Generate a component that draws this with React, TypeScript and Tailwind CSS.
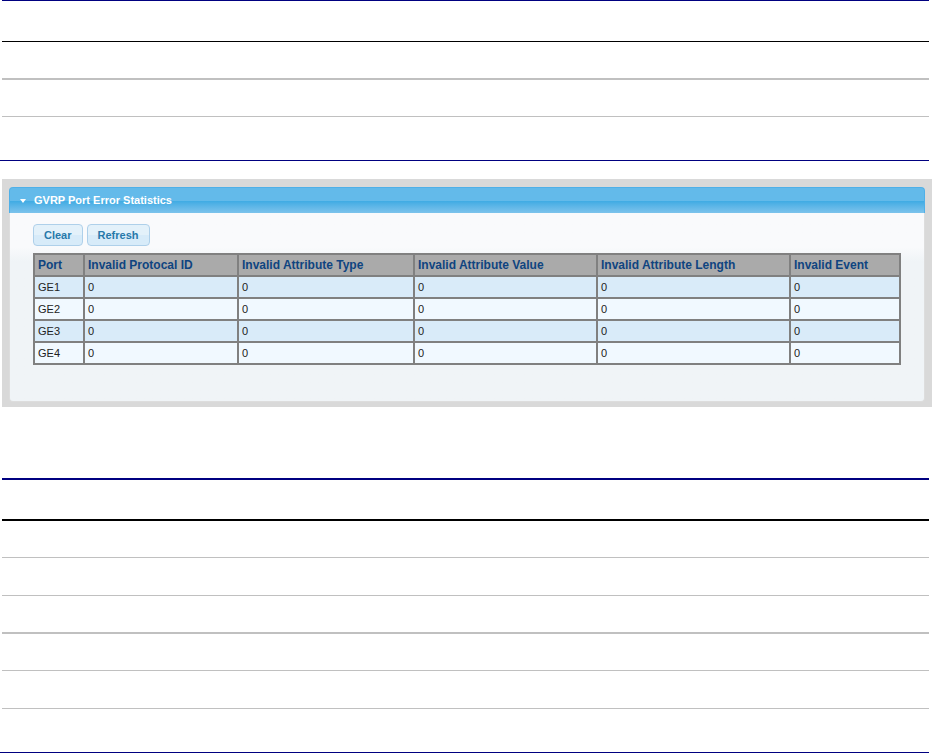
import React from 'react';

const COLUMNS = [
  { label: 'Port', width: 'w-[50px]' },
  { label: 'Invalid Protocal ID', width: 'w-[154px]' },
  { label: 'Invalid Attribute Type', width: 'w-[176px]' },
  { label: 'Invalid Attribute Value', width: 'w-[183px]' },
  { label: 'Invalid Attribute Length', width: 'w-[193px]' },
  { label: 'Invalid Event', width: 'w-auto' },
];

const STATS = [
  { port: 'GE1', values: [0, 0, 0, 0, 0] },
  { port: 'GE2', values: [0, 0, 0, 0, 0] },
  { port: 'GE3', values: [0, 0, 0, 0, 0] },
  { port: 'GE4', values: [0, 0, 0, 0, 0] },
];

// Ruled rows of the manual: each one ends with its rule
const TOP_RULES = [
  'h-px border-t border-[#000080] ml-0.5 mr-1',
  'h-[41px] border-b border-black ml-0.5 mr-1',
  'h-[38px] border-b-2 border-[#c0c0c0] ml-0.5 mr-1',
  'h-[37px] border-b border-[#c0c0c0] ml-0.5 mr-1',
  'h-11 border-b border-[#000080] mr-1',
];

const BOTTOM_RULES = [
  'h-0.5 border-t-2 border-[#000080] ml-0.5 mr-1',
  'h-[41px] border-b-2 border-black ml-0.5 mr-1',
  'h-[37px] border-b border-[#c0c0c0] ml-0.5 mr-1',
  'h-[38px] border-b border-[#c0c0c0] ml-0.5 mr-1',
  'h-[38px] border-b-2 border-[#c0c0c0] ml-0.5 mr-1',
  'h-[37px] border-b border-[#c0c0c0] ml-0.5 mr-1',
  'h-[38px] border-b border-[#c0c0c0] ml-0.5 mr-1',
  'h-11 border-b border-[#000080] mr-1',
];

const RuledRows: React.FC<{ rows: string[] }> = ({ rows }) => (
  <div>
    {rows.map((row, i) => (
      <div key={i} className={row} />
    ))}
  </div>
);

const PanelButton: React.FC<{ children: React.ReactNode }> = ({ children }) => (
  <button
    type="button"
    className="h-[22px] px-2.5 rounded border border-[#aed0ea] bg-linear-to-b from-[#e3f1fa] from-50% to-[#d7ebf9] to-50% text-[11px] leading-5 font-bold text-[#2779aa]"
  >
    {children}
  </button>
);

const ErrorTable = () => (
  <table className="w-full table-fixed border-collapse border border-[#808080] text-left text-[11px] leading-4">
    <thead>
      <tr className="h-[22px] bg-[#aaaaaa] text-xs text-[#0f4480]">
        {COLUMNS.map((col) => (
          <th key={col.label} scope="col" className={`${col.width} border-2 border-[#808080] px-[3px] py-0 font-bold whitespace-nowrap`}>
            {col.label}
          </th>
        ))}
      </tr>
    </thead>
    <tbody>
      {STATS.map((row) => (
        <tr key={row.port} className="h-[22px] odd:bg-[#d9ebf9] even:bg-[#f1f9ff] text-[#222222]">
          <td className="border-2 border-[#808080] px-[3px] py-0">{row.port}</td>
          {row.values.map((value, i) => (
            <td key={i} className="border-2 border-[#808080] px-[3px] py-0">{value}</td>
          ))}
        </tr>
      ))}
    </tbody>
  </table>
);

export default function App() {
  return (
    <main className="bg-white font-['Liberation_Sans',Arial,sans-serif]">
      <RuledRows rows={TOP_RULES} />

      <section className="mt-[18px] ml-0.5 mr-px bg-[#d9d9d9] px-[7px] pt-2 pb-[5px]">
        <h2 className="flex h-[26px] items-center gap-2 rounded-t border border-b-0 border-[#4fb0e8] bg-linear-to-b from-[#63baea] from-50% via-[#3baae3] via-50% to-[#7cc3ec] pl-2.5 text-[11px] font-bold text-white">
          <svg width="6" height="4" viewBox="0 0 6 4" fill="currentColor" aria-hidden="true">
            <path d="M0 0h6L3 4z" />
          </svg>
          GVRP Port Error Statistics
        </h2>
        <div className="rounded-b border border-t-0 border-[#dddddd] bg-linear-to-b from-[#f9fafc] from-[34px] to-[#f0f4f7] to-[48px] px-[23px] pt-[11px] pb-9">
          <div className="mb-[7px] flex gap-1">
            <PanelButton>Clear</PanelButton>
            <PanelButton>Refresh</PanelButton>
          </div>
          <ErrorTable />
        </div>
      </section>

      <div className="mt-[71px]">
        <RuledRows rows={BOTTOM_RULES} />
      </div>
    </main>
  );
}
